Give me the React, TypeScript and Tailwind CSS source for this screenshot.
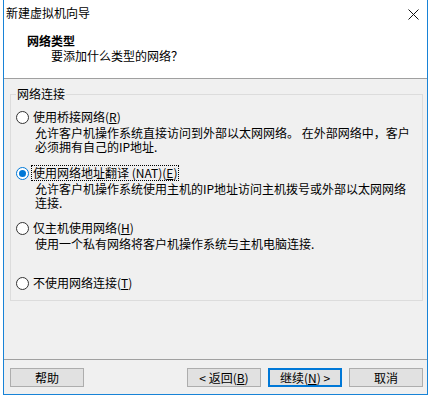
import type { ReactNode } from 'react'

const font = { fontFamily: '"Microsoft YaHei", "Noto Sans CJK SC", "Liberation Sans", sans-serif' }

function Radio({ checked }: { checked?: boolean }) {
  return (
    <span
      className={`flex h-[13px] w-[13px] shrink-0 items-center justify-center rounded-full border bg-white ${
        checked ? 'border-[#0078d7]' : 'border-[#333333]'
      }`}
    >
      {checked && <span className="h-[7px] w-[7px] rounded-full bg-[#0078d7]" />}
    </span>
  )
}

function Option({
  label,
  checked,
  focused,
  children,
  className,
}: {
  label: ReactNode
  checked?: boolean
  focused?: boolean
  children?: ReactNode
  className?: string
}) {
  return (
    <div className={className}>
      <div className="flex h-[14px] items-center gap-[3px]">
        <Radio checked={checked} />
        <span
          className={`whitespace-nowrap px-[1px] leading-[14px] ${
            focused ? 'outline outline-1 outline-dotted outline-black' : ''
          }`}
        >
          {label}
        </span>
      </div>
      {children && <div className="mt-[2px] pl-[19px] leading-[14px]">{children}</div>}
    </div>
  )
}

function Button({ children, primary }: { children: ReactNode; primary?: boolean }) {
  return (
    <button
      className={`flex h-[19px] w-[74px] items-center justify-center bg-[#e1e1e1] text-[12px] leading-none text-black ${
        primary ? 'border-2 border-[#0078d7]' : 'border border-[#adadad]'
      }`}
    >
      {children}
    </button>
  )
}

export default function App() {
  return (
    <div className="h-[397px] w-[432px] bg-white pl-[3px] text-[12px] text-black" style={font}>
      <div className="flex h-[395px] w-[425px] flex-col border-x border-b border-[#1883d7] bg-[#f0f0f0]">
        {/* Title bar */}
        <div className="flex h-[26px] items-center justify-between bg-white pl-[2px] pr-[8px]">
          <span className="leading-[14px]">新建虚拟机向导</span>
          <svg width="11" height="11" viewBox="0 0 11 11" className="mt-[2px]">
            <path d="M0.5 0.5 L10.5 10.5 M10.5 0.5 L0.5 10.5" stroke="#111" strokeWidth="1" />
          </svg>
        </div>

        {/* Header */}
        <div className="h-[53px] border-b border-[#a0a0a0] bg-white pl-[23px] pt-[8px]">
          <div className="font-bold leading-[14px]">网络类型</div>
          <div className="mt-[1px] pl-[24px] leading-[14px]">要添加什么类型的网络？</div>
        </div>

        {/* Body */}
        <div className="h-[280px] pl-[6px] pt-[8px]">
          <fieldset className="w-[413px] border border-[#dcdcdc] px-[5px] pb-[10px]">
            <legend className="px-[1px] leading-[14px]">网络连接</legend>
            <Option
              className="mt-[9px]"
              label={
                <>
                  使用桥接网络(<u>R</u>)
                </>
              }
            >
              允许客户机操作系统直接访问到外部以太网网络。 在外部网络中，客户
              <br />
              必须拥有自己的IP地址.
            </Option>
            <Option
              className="mt-[12px]"
              checked
              focused
              label={
                <>
                  使用网络地址翻译 (NAT)(<u>E</u>)
                </>
              }
            >
              允许客户机操作系统使用主机的IP地址访问主机拨号或外部以太网网络
              <br />
              连接.
            </Option>
            <Option
              className="mt-[11px]"
              label={
                <>
                  仅主机使用网络(<u>H</u>)
                </>
              }
            >
              使用一个私有网络将客户机操作系统与主机电脑连接.
            </Option>
            <Option
              className="mt-[25px]"
              label={
                <>
                  不使用网络连接(<u>T</u>)
                </>
              }
            />
          </fieldset>
        </div>

        {/* Footer */}
        <div className="flex flex-1 items-start border-t border-[#a0a0a0] pl-[6px] pr-[4px] pt-[8px]">
          <Button>帮助</Button>
          <div className="ml-auto flex gap-[7px]">
            <Button>
              &lt; 返回(<u>B</u>)
            </Button>
            <Button primary>
              继续(<u>N</u>) &gt;
            </Button>
            <Button>取消</Button>
          </div>
        </div>
      </div>
    </div>
  )
}
